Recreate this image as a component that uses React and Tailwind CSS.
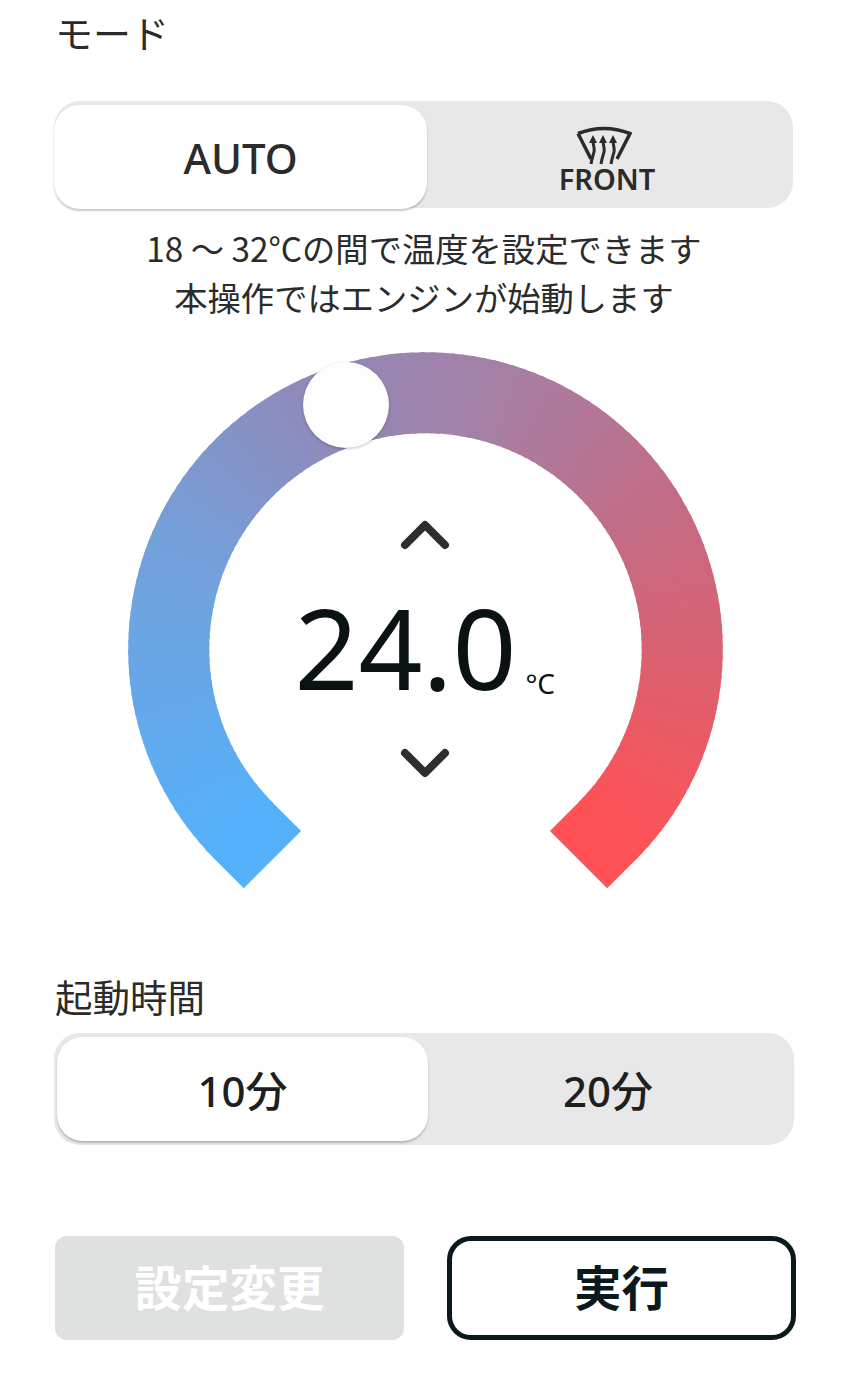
const FONT = { fontFamily: '"Noto Sans", "Noto Sans CJK JP", sans-serif' }

// colour stops along the arc, from the blue end to the red end
const stops = [
  [0, [85, 176, 250]],
  [0.25, [116, 160, 218]],
  [0.42, [146, 136, 184]],
  [0.55, [165, 128, 166]],
  [0.72, [194, 108, 134]],
  [0.85, [220, 96, 110]],
  [1, [255, 82, 86]],
]

function colorAt(t) {
  for (let i = 1; i < stops.length; i++) {
    if (t <= stops[i][0]) {
      const [t0, c0] = stops[i - 1]
      const [t1, c1] = stops[i]
      const k = (t - t0) / (t1 - t0)
      const c = c0.map((v, n) => Math.round(v + (c1[n] - v) * k))
      return `rgb(${c.join(',')})`
    }
  }
  return 'rgb(255,82,86)'
}

function Gauge() {
  const cx = 297.5
  const cy = 297.5
  const r = 256.75
  const count = 135
  const segments = Array.from({ length: count }, (_, i) => {
    const a0 = 135 + (270 * i) / count
    const a1 = 135 + (270 * (i + 1.4)) / count
    const p = (a) => {
      const rad = (Math.min(a, 405) * Math.PI) / 180
      return `${cx + r * Math.cos(rad)} ${cy + r * Math.sin(rad)}`
    }
    return <path key={i} d={`M${p(a0)} A${r} ${r} 0 0 1 ${p(a1)}`} stroke={colorAt(i / (count - 1))} />
  })
  const edge = r * Math.SQRT1_2
  return (
    <svg width="595" height="540" viewBox="0 0 595 540" fill="none" strokeWidth="81">
      {segments}
      {/* straight ends go on top and run a little into the arc to hide the seam */}
      <path d={`M${cx - edge + 28.5} ${cy + edge + 28.5} L${cx - edge - 2} ${cy + edge - 2}`} stroke="rgb(85,176,250)" />
      <path d={`M${cx + edge - 28.5} ${cy + edge + 28.5} L${cx + edge + 2} ${cy + edge - 2}`} stroke="rgb(255,82,86)" />
    </svg>
  )
}

function FrontIcon() {
  return (
    <svg className="-ml-[3px]" width="56" height="40" viewBox="0 0 56 40" fill="none" stroke="#2b2b2b" strokeWidth="3.5">
      <path d="M2 7.5Q28 -2.5 54 7.5L41 33M15 33L2 7.5" />
      {[17, 27, 37].map((x) => (
        <g key={x}>
          <path d={`M${x} 14C${x} 20 ${x + 2} 22 ${x + 1} 26C${x} 30 ${x - 1} 32 ${x - 2} 38`} strokeWidth="3" />
          <path d={`M${x - 4} 17L${x} 9L${x + 4} 17Z`} fill="#2b2b2b" stroke="none" />
        </g>
      ))}
    </svg>
  )
}

export default function App() {
  return (
    <div className="w-[856px] h-[1385px] bg-white text-[#2b2b2b] overflow-hidden pl-[54px] pr-[62px]" style={FONT}>
      <h2 className="text-[38px] leading-[50px] pl-[1px] pt-[8px] font-normal">モード</h2>

      <div className="mt-[43px] h-[107px] w-[739px] rounded-[26px] bg-[#e8e8e8] flex items-stretch">
        <div className="w-[373px] mt-[4px] -mb-[1px] rounded-[26px] bg-white shadow-[0_2px_2px_rgba(0,0,0,0.22)] flex items-center justify-center text-[42px] font-medium">
          AUTO
        </div>
        <div className="flex-1 flex flex-col items-center justify-center pt-[9px] pr-[9px]">
          <FrontIcon />
          <span className="text-[29px] leading-[28px] font-semibold -mt-[1px] ml-[3px]">FRONT</span>
        </div>
      </div>

      <p className="mt-[15px] text-center text-[33.3px] leading-[49px] text-[#2b2b2b] font-['Noto_Sans_CJK_JP',sans-serif]">
        18 〜 32°Cの間で温度を設定できます
        <br />
        本操作ではエンジンが始動します
      </p>

      <div className="relative mt-[31px] ml-[74px] w-[595px] h-[540px]">
        <Gauge />
        <div className="absolute left-[175px] top-[10px] w-[86px] h-[86px] rounded-full bg-[#fdfdfd] shadow-[0_1px_3px_rgba(0,0,0,0.25)]" />
        <div className="absolute left-0 top-[168px] w-[595px] flex flex-col items-center">
          <svg className="-ml-[2px]" width="50" height="30" viewBox="0 0 50 30" fill="none" stroke="#2e2e2e" strokeWidth="8" strokeLinecap="round" strokeLinejoin="round">
            <path d="M5 25L25 5L45 25" />
          </svg>
          <div className="relative -ml-[40px] text-[112px] leading-[154px] mt-[20px] text-[#0a1214]">
            24.0
            <span className="absolute left-[231px] top-[93px] text-[28px] leading-[40px] whitespace-nowrap">°C</span>
          </div>
          <svg className="mt-[24px] -ml-[2px]" width="50" height="30" viewBox="0 0 50 30" fill="none" stroke="#2e2e2e" strokeWidth="8" strokeLinecap="round" strokeLinejoin="round">
            <path d="M5 5L25 25L45 5" />
          </svg>
        </div>
      </div>

      <h2 className="mt-[80px] text-[37.5px] leading-[52px] pl-[1px] font-normal">起動時間</h2>

      <div className="mt-[9px] h-[112px] rounded-[26px] bg-[#e8e8e8] flex items-center pl-[3px] text-[42px] font-medium text-[#1f1f1f]">
        <div className="w-[371px] h-[104px] rounded-[26px] bg-white shadow-[0_2px_2px_rgba(0,0,0,0.22)] flex items-center justify-center pt-[3px]">
          10分
        </div>
        <div className="flex-1 flex items-center justify-center pr-[6px] pt-[3px]">20分</div>
      </div>

      <div className="mt-[91px] pl-[1px] flex justify-between w-[742px] text-[47.5px] font-bold">
        <button className="w-[349px] h-[104px] rounded-[12px] bg-[#dfe0e0] text-white">設定変更</button>
        <button className="w-[349px] h-[104px] rounded-[24px] border-[5px] border-[#0a1a1c] bg-white text-[#0a1a1c]">実行</button>
      </div>
    </div>
  )
}
